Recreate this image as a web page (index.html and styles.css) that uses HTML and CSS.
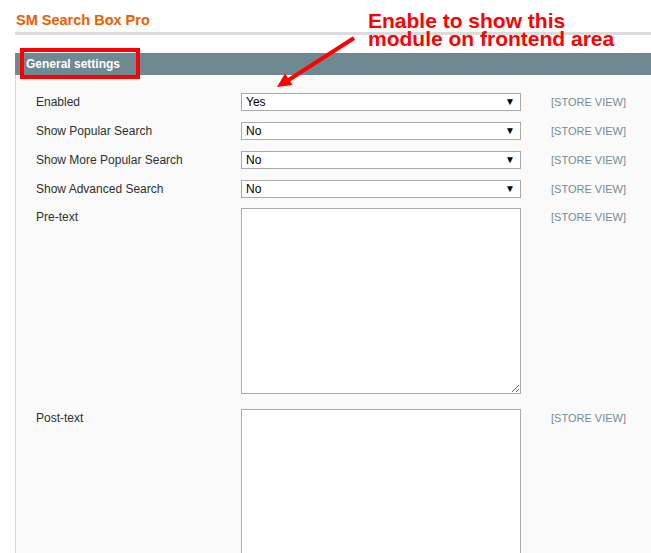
FILE: index.html
```html
<!DOCTYPE html>
<html lang="en">
<head>
    <meta charset="UTF-8">
    <title>SM Search Box Pro</title>
    <link rel="stylesheet" href="styles.css">
</head>
<body>
    <div class="page">
        <h3 class="page-title">SM Search Box Pro</h3>

        <div class="section-head">General settings</div>
        <div class="fieldset">
            <div class="row">
                <label class="label">Enabled</label>
                <div class="select"><span>Yes</span><span class="arrow">&#9660;</span></div>
                <span class="scope">[STORE VIEW]</span>
            </div>
            <div class="row">
                <label class="label">Show Popular Search</label>
                <div class="select"><span>No</span><span class="arrow">&#9660;</span></div>
                <span class="scope">[STORE VIEW]</span>
            </div>
            <div class="row">
                <label class="label">Show More Popular Search</label>
                <div class="select"><span>No</span><span class="arrow">&#9660;</span></div>
                <span class="scope">[STORE VIEW]</span>
            </div>
            <div class="row row-last">
                <label class="label">Show Advanced Search</label>
                <div class="select"><span>No</span><span class="arrow">&#9660;</span></div>
                <span class="scope">[STORE VIEW]</span>
            </div>
            <div class="row row-text">
                <label class="label">Pre-text</label>
                <textarea class="textarea"></textarea>
                <span class="scope">[STORE VIEW]</span>
            </div>
            <div class="row row-text">
                <label class="label">Post-text</label>
                <textarea class="textarea"></textarea>
                <span class="scope">[STORE VIEW]</span>
            </div>
        </div>
    </div>

    <!-- annotation drawn over the screenshot -->
    <div class="mark-box"></div>
    <div class="note">
        <div class="note-line">Enable to show this</div>
        <div class="note-line">module on frontend area</div>
    </div>
    <svg class="note-arrow" width="651" height="120" viewBox="0 0 651 120">
        <line x1="354" y1="38" x2="287" y2="81" stroke="#f00" stroke-width="4"/>
        <polygon points="277,87 292.5,85 285,73.5" fill="#f00"/>
    </svg>
</body>
</html>
```

FILE: styles.css
```css
body {
    margin: 0;
    padding: 0;
    background: #fff;
    font-family: "Liberation Sans", Arial, sans-serif;
    overflow: hidden;
}

.page {
    padding-left: 15px;
}

.page-title {
    margin: 0;
    padding: 11px 0 3px 1px;
    font-size: 14.5px;
    line-height: 18px;
    font-weight: bold;
    color: #eb5e00;
    border-bottom: 3px solid #dcdcdc;
}

.section-head {
    margin-top: 18px;
    height: 22px;
    line-height: 22px;
    padding-left: 11px;
    background: #6f8992;
    color: #fff;
    font-size: 12px;
    font-weight: bold;
}

.fieldset {
    background: #fafafa;
    border-left: 1px solid #d6d6d6;
    padding: 18px 0 40px 20px;
}

.row {
    display: flex;
    align-items: flex-start;
    margin-bottom: 11px;
}
.row-last {
    margin-bottom: 10px;
}
.row-text {
    margin-bottom: 15px;
}

.label {
    width: 205px;
    font-size: 12px;
    line-height: 18px;
    color: #2f2f2f;
}

.select {
    box-sizing: border-box;
    width: 280px;
    height: 18px;
    border: 1px solid #a9a9a9;
    background: #fff;
    display: flex;
    justify-content: space-between;
    align-items: center;
    padding: 0 5px 0 4px;
    font-size: 12px;
    color: #000;
}
.select .arrow {
    font-size: 10px;
    line-height: 10px;
}

.textarea {
    box-sizing: border-box;
    width: 280px;
    height: 186px;
    margin: 0;
    border: 1px solid #ababab;
    background: #fff;
    resize: both;
}

.scope {
    margin-left: 30px;
    font-size: 11px;
    line-height: 18px;
    color: #768a95;
}

/* annotation */
.mark-box {
    position: absolute;
    left: 20px;
    top: 48px;
    width: 112px;
    height: 23px;
    border: 4px solid #f00;
}
.note {
    position: absolute;
    left: 368px;
    top: 12px;
    font-size: 21px;
    font-weight: bold;
    color: #f00;
}
.note-line {
    height: 18px;
    line-height: 18px;
}
.note-arrow {
    position: absolute;
    left: 0;
    top: 0;
}
```
